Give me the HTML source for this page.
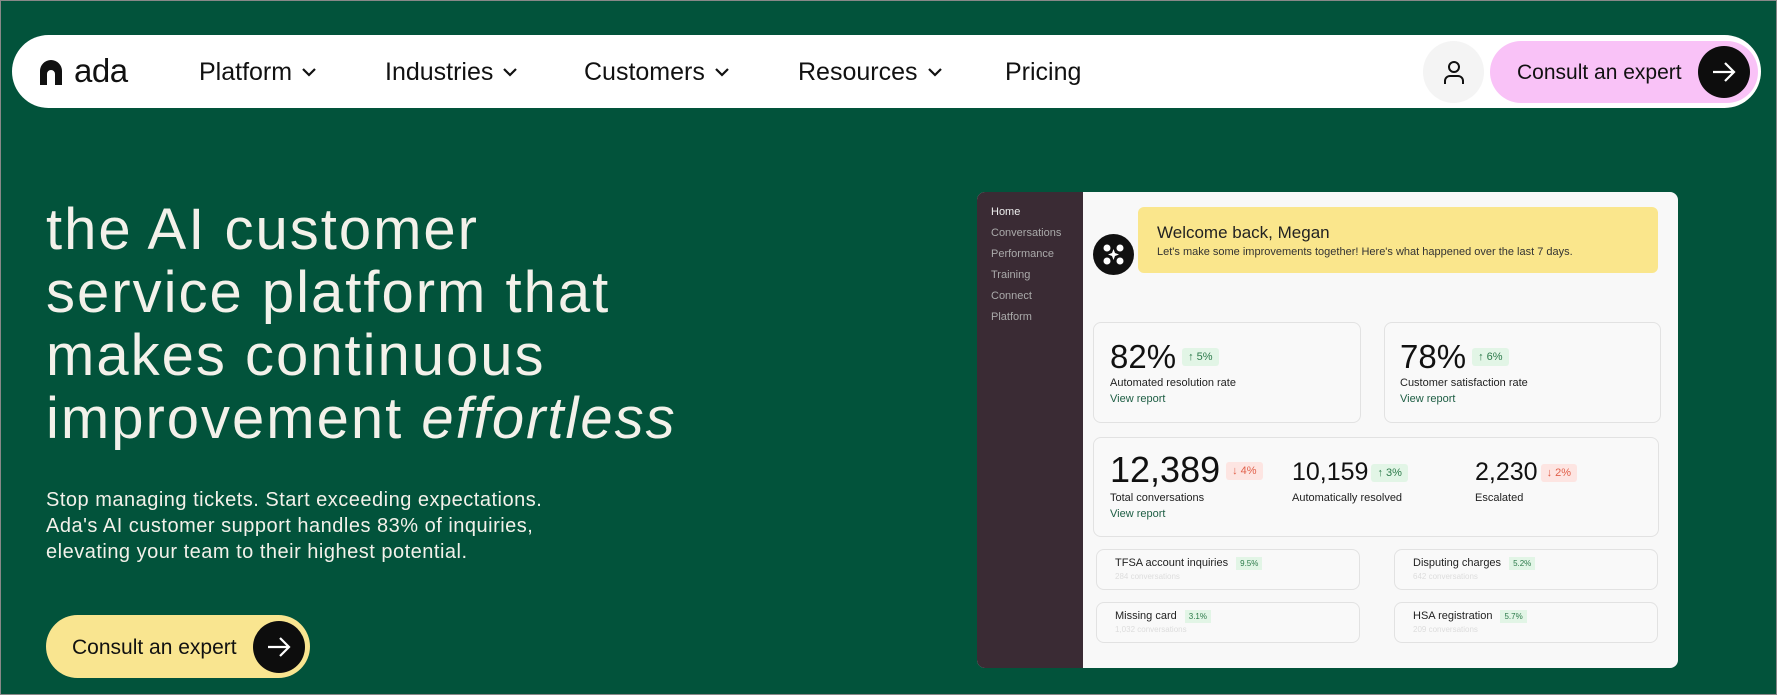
<!DOCTYPE html>
<html><head><meta charset="utf-8"><style>
*{margin:0;padding:0;box-sizing:border-box}
body{width:1777px;height:695px;overflow:hidden;background:#02533b;font-family:"Liberation Sans",sans-serif;position:relative;border:1px solid #888}
.a{position:absolute;white-space:nowrap}
.nav{left:11px;top:34px;width:1749px;height:73px;background:#fff;border-radius:37px}
.ni{font-size:25px;color:#111;top:57px}
.ni svg{margin-left:10px;vertical-align:3px}
h1{position:absolute;left:45px;top:197px;font-size:58px;font-weight:400;line-height:63px;color:#f3f1ea;letter-spacing:2px}
.p{left:45px;top:486px;font-size:20px;line-height:26px;color:#f3f1ea;letter-spacing:0.5px}
.dash{left:976px;top:191px;width:701px;height:476px;background:#f8f8f8;border-radius:8px;overflow:hidden}
.side{left:0;top:0;width:106px;height:476px;background:#3a2b34}
.si{font-size:11px;color:#aaa;left:14px}
.card{position:absolute;border:1.5px solid #e2e2e2;border-radius:8px;background:#f9f9f9}
.big{font-size:33px;color:#111}
.bd{display:inline-block;font-size:11px;padding:3px 6px;border-radius:3px;vertical-align:8px;margin-left:6px}
.g{background:#e2f5e6;color:#2c7a4a}
.r{background:#fde5e2;color:#e0604a}
.lb{font-size:11px;color:#222}
.vr{font-size:11px;color:#1e5e44}
.sc{font-size:11px;color:#222;left:18px;top:7px}
.sc span{font-size:8px;color:#2c7a4a;background:#e2f5e6;padding:2px 4px;margin-left:8px}
.sc div{font-size:8px;color:#ddd;margin-top:3px}
</style></head><body>
<div class="a nav"></div>
<svg class="a" style="left:37px;top:58px" width="26" height="26" viewBox="0 0 26 26"><path d="M2 26V12A11 11 0 0 1 24 12V26H17V15A4 4 0 0 0 9 15V26Z" fill="#111"/></svg>
<div class="a" style="left:73px;top:51px;font-size:33px;color:#111;letter-spacing:-0.5px">ada</div>
<div class="a ni" style="left:198px">Platform<svg width="14" height="9"><path d="M1 1l6 6 6-6" stroke="#111" stroke-width="2.2" fill="none"/></svg></div>
<div class="a ni" style="left:384px">Industries<svg width="14" height="9"><path d="M1 1l6 6 6-6" stroke="#111" stroke-width="2.2" fill="none"/></svg></div>
<div class="a ni" style="left:583px">Customers<svg width="14" height="9"><path d="M1 1l6 6 6-6" stroke="#111" stroke-width="2.2" fill="none"/></svg></div>
<div class="a ni" style="left:797px">Resources<svg width="14" height="9"><path d="M1 1l6 6 6-6" stroke="#111" stroke-width="2.2" fill="none"/></svg></div>
<div class="a ni" style="left:1004px">Pricing</div>
<div class="a" style="left:1422px;top:40px;width:61px;height:62px;border-radius:50%;background:#f4f4f4"></div>
<svg class="a" style="left:1440px;top:58px" width="26" height="26" viewBox="0 0 26 26"><circle cx="13" cy="8" r="5" stroke="#111" stroke-width="2" fill="none"/><path d="M4 25v-3a5 5 0 0 1 5-5h8a5 5 0 0 1 5 5v3" stroke="#111" stroke-width="2" fill="none"/></svg>
<div class="a" style="left:1489px;top:40px;width:268px;height:62px;border-radius:31px;background:#f9c2f7"></div>
<div class="a" style="left:1516px;top:60px;font-size:21px;color:#111">Consult an expert</div>
<div class="a" style="left:1697px;top:45px;width:52px;height:52px;border-radius:50%;background:#0d0d0d"></div>
<svg class="a" style="left:1710px;top:58px" width="26" height="26"><path d="M2 13h21M14 4l9 9-9 9" stroke="#fff" stroke-width="2.2" fill="none"/></svg>

<h1>the AI customer<br>service platform that<br>makes continuous<br>improvement <i>effortless</i></h1>
<div class="a p">Stop managing tickets. Start exceeding expectations.<br>Ada's AI customer support handles 83% of inquiries,<br>elevating your team to their highest potential.</div>
<div class="a" style="left:45px;top:614px;width:264px;height:63px;border-radius:32px;background:#f9e590"></div>
<div class="a" style="left:71px;top:635px;font-size:21px;color:#111">Consult an expert</div>
<div class="a" style="left:252px;top:620px;width:52px;height:52px;border-radius:50%;background:#0d0d0d"></div>
<svg class="a" style="left:265px;top:633px" width="26" height="26"><path d="M2 13h21M14 4l9 9-9 9" stroke="#fff" stroke-width="2.2" fill="none"/></svg>

<div class="a dash">
<div class="a side"></div>
<div class="a si" style="top:14px;color:#eee">Home</div>
<div class="a si" style="top:35px">Conversations</div>
<div class="a si" style="top:56px">Performance</div>
<div class="a si" style="top:77px">Training</div>
<div class="a si" style="top:98px">Connect</div>
<div class="a si" style="top:119px">Platform</div>
<div class="a" style="left:161px;top:15px;width:520px;height:66px;background:#fae68c;border-radius:6px"></div>
<div class="a" style="left:180px;top:31px;font-size:17px;color:#222">Welcome back, Megan</div>
<div class="a" style="left:180px;top:54px;font-size:11px;color:#333">Let's make some improvements together! Here's what happened over the last 7 days.</div>
<div class="a" style="left:116px;top:42px;width:41px;height:41px;border-radius:50%;background:#111"></div>
<svg class="a" style="left:116px;top:42px" width="41" height="41"><circle cx="14" cy="14" r="3.5" fill="#fff"/><circle cx="27" cy="14" r="3.5" fill="#fff"/><circle cx="14" cy="27" r="3.5" fill="#fff"/><circle cx="27" cy="27" r="3.5" fill="#fff"/><path d="M20.5 15l1.5 4 4 1.5-4 1.5-1.5 4-1.5-4-4-1.5 4-1.5z" fill="#fff"/></svg>

<div class="card" style="left:116px;top:130px;width:268px;height:101px"></div>
<div class="a" style="left:133px;top:146px"><span class="big">82%</span><span class="bd g">↑ 5%</span></div>
<div class="a lb" style="left:133px;top:185px">Automated resolution rate</div>
<div class="a vr" style="left:133px;top:201px">View report</div>
<div class="card" style="left:407px;top:130px;width:277px;height:101px"></div>
<div class="a" style="left:423px;top:146px"><span class="big">78%</span><span class="bd g">↑ 6%</span></div>
<div class="a lb" style="left:423px;top:185px">Customer satisfaction rate</div>
<div class="a vr" style="left:423px;top:201px">View report</div>

<div class="card" style="left:116px;top:245px;width:566px;height:100px"></div>
<div class="a" style="left:133px;top:257px"><span class="big" style="font-size:36px">12,389</span><span class="bd r">↓ 4%</span></div>
<div class="a" style="left:315px;top:266px"><span class="big" style="font-size:25px">10,159</span><span class="bd g" style="vertical-align:4px;margin-left:3px">↑ 3%</span></div>
<div class="a" style="left:498px;top:266px"><span class="big" style="font-size:25px">2,230</span><span class="bd r" style="vertical-align:4px;margin-left:3px">↓ 2%</span></div>
<div class="a lb" style="left:133px;top:300px">Total conversations</div>
<div class="a lb" style="left:315px;top:300px">Automatically resolved</div>
<div class="a lb" style="left:498px;top:300px">Escalated</div>
<div class="a vr" style="left:133px;top:316px">View report</div>

<div class="card" style="left:119px;top:357px;width:264px;height:41px"><div class="a sc">TFSA account inquiries<span>9.5%</span><div>284 conversations</div></div></div>
<div class="card" style="left:417px;top:357px;width:264px;height:41px"><div class="a sc">Disputing charges<span>5.2%</span><div>642 conversations</div></div></div>
<div class="card" style="left:119px;top:410px;width:264px;height:41px"><div class="a sc">Missing card<span>3.1%</span><div>1,032 conversations</div></div></div>
<div class="card" style="left:417px;top:410px;width:264px;height:41px"><div class="a sc">HSA registration<span>5.7%</span><div>209 conversations</div></div></div>
</div>
</body></html>
